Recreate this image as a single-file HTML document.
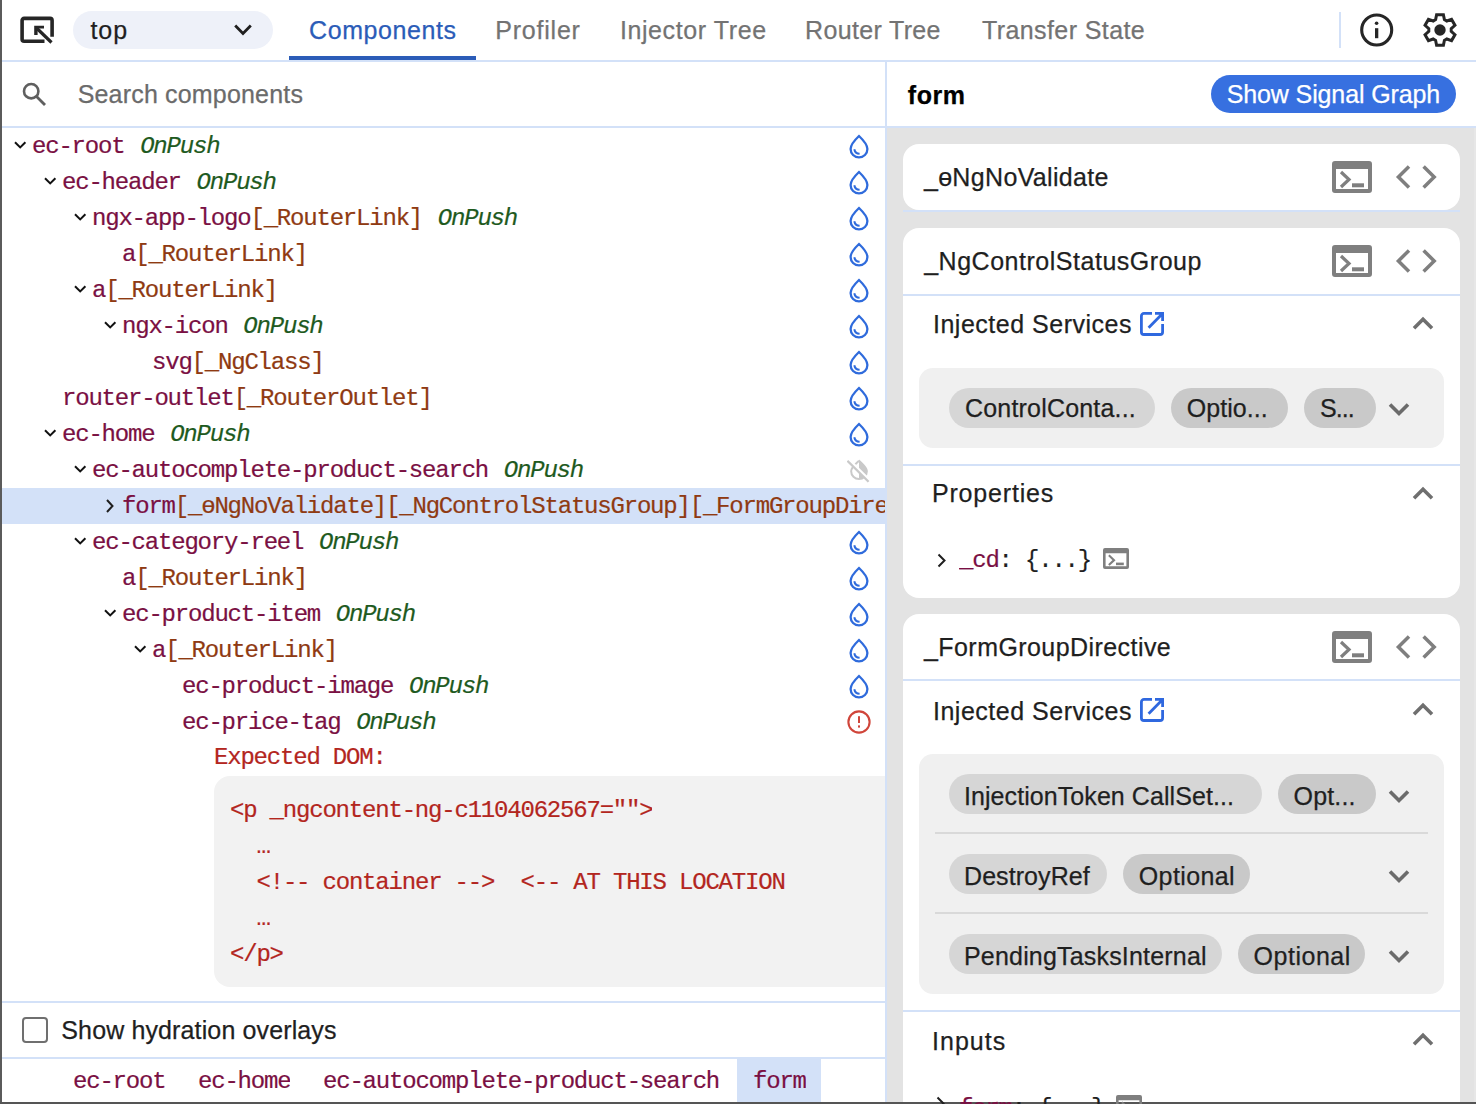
<!DOCTYPE html><html><head><meta charset="utf-8"><style>*{margin:0;padding:0;box-sizing:content-box}
html,body{width:1476px;height:1104px;overflow:hidden;background:#fff;position:relative}
.r,.t,.m,.ic{position:absolute}
.t,.m{z-index:2}.ic{z-index:3}
.t{white-space:pre;-webkit-text-stroke:0.25px currentColor}
.m{white-space:pre;-webkit-text-stroke:0.2px currentColor;font-family:"Liberation Mono",monospace;font-size:24px;letter-spacing:-1.2px;overflow:hidden;max-width:2000px}
.chip{height:40px;border-radius:20px;background:#d6d6d6}
.chip2{height:40px;border-radius:20px;background:#c9c9c9}
</style></head><body>
<div class="r" style="left:0;top:60px;width:1476px;height:2px;background:#d3e1f8"></div>
<svg class="ic" style="left:18px;top:14px" width="40" height="32" viewBox="0 0 40 32"><path d="M26.5 27.2H6.1A2 2 0 0 1 4.1 25.2V6.4A2 2 0 0 1 6.1 4.4H32.1A2 2 0 0 1 34.1 6.4V22.8" fill="none" stroke="#262626" stroke-width="3.6"/><path d="M16.2 11.7H26V14.5H19.6V21H16.2Z" fill="#262626"/><path d="M18 13.5L33.5 28.5" stroke="#262626" stroke-width="3.2"/></svg>
<div class="r" style="left:73px;top:11px;width:200px;height:38px;border-radius:19px;background:#eef1f9"></div>
<svg class="ic" style="left:232px;top:21.5px" width="22" height="16" viewBox="0 0 22 16"><path d="M3.2 3.6l7.8 7.8 7.8-7.8" fill="none" stroke="#1f1f1f" stroke-width="2.8"/></svg>
<div class="r" style="left:289px;top:56px;width:187px;height:4px;background:#2b5cb8"></div>
<div class="r" style="left:1339px;top:12px;width:2px;height:36px;background:#d3e1f8"></div>
<svg class="ic" style="left:1358px;top:11px" width="38" height="38" viewBox="0 0 38 38"><circle cx="18.7" cy="19" r="15" fill="none" stroke="#262626" stroke-width="3.1"/><circle cx="18.6" cy="12.3" r="1.8" fill="#262626"/><rect x="17" y="17.2" width="3.3" height="10" fill="#262626"/></svg>
<svg class="ic" style="left:1420.4px;top:10px" width="40" height="40" viewBox="0 0 40 40"><path d="M15.60 9.60 L16.60 4.70 L23.40 4.70 L24.40 9.60 L26.81 10.99 L31.55 9.41 L34.95 15.29 L31.21 18.61 L31.21 21.39 L34.95 24.71 L31.55 30.59 L26.81 29.01 L24.40 30.40 L23.40 35.30 L16.60 35.30 L15.60 30.40 L13.19 29.01 L8.45 30.59 L5.05 24.71 L8.79 21.39 L8.79 18.61 L5.05 15.29 L8.45 9.41 L13.19 10.99Z" fill="none" stroke="#262626" stroke-width="3" stroke-linejoin="miter"/><circle cx="20" cy="20" r="5.7" fill="#262626"/></svg>
<div class="r" style="left:0;top:126px;width:885px;height:2px;background:#d3e1f8"></div>
<svg class="ic" style="left:20px;top:80px" width="28" height="28" viewBox="0 0 28 28"><circle cx="11.2" cy="11.2" r="7.2" fill="none" stroke="#5f5f5f" stroke-width="2.6"/><path d="M16.3 16.3L25 25" stroke="#5f5f5f" stroke-width="2.8"/></svg>
<div class="r" style="left:2px;top:488px;width:883px;height:36px;background:#d3e1f8"></div>
<div class="m" style="left:32px;top:132.91px;line-height:28.799999999999997px;width:853px;overflow:hidden"><span style="color:#7a1043">ec-root</span> <span style="color:#1e5a1e;font-style:italic;margin-left:2.5px">OnPush</span></div>
<svg class="ic" style="left:14px;top:141.4px" width="13" height="8" viewBox="0 0 13 8"><path d="M1 1.2l5.2 5.2L11.4 1.2" fill="none" stroke="#111" stroke-width="2"/></svg>
<svg class="ic" style="left:847.3px;top:133.5px" width="24" height="26" viewBox="0 0 24 26"><path d="M12 2 C8 5.8 3.6 10 3.6 15 A8.4 8.4 0 0 0 20.4 15 C20.4 10 16 5.8 12 2Z" fill="none" stroke="#2f6bdc" stroke-width="2.3" stroke-linejoin="miter"/><path d="M7.3 15.2 C7.8 18 9.8 19.7 12.6 19.8" fill="none" stroke="#2f6bdc" stroke-width="2"/></svg>
<div class="m" style="left:62px;top:168.91px;line-height:28.799999999999997px;width:823px;overflow:hidden"><span style="color:#7a1043">ec-header</span> <span style="color:#1e5a1e;font-style:italic;margin-left:2.5px">OnPush</span></div>
<svg class="ic" style="left:44px;top:177.4px" width="13" height="8" viewBox="0 0 13 8"><path d="M1 1.2l5.2 5.2L11.4 1.2" fill="none" stroke="#111" stroke-width="2"/></svg>
<svg class="ic" style="left:847.3px;top:169.5px" width="24" height="26" viewBox="0 0 24 26"><path d="M12 2 C8 5.8 3.6 10 3.6 15 A8.4 8.4 0 0 0 20.4 15 C20.4 10 16 5.8 12 2Z" fill="none" stroke="#2f6bdc" stroke-width="2.3" stroke-linejoin="miter"/><path d="M7.3 15.2 C7.8 18 9.8 19.7 12.6 19.8" fill="none" stroke="#2f6bdc" stroke-width="2"/></svg>
<div class="m" style="left:92px;top:204.91px;line-height:28.799999999999997px;width:793px;overflow:hidden"><span style="color:#7a1043">ngx-app-logo</span><span style="color:#8f3a12">[_RouterLink]</span> <span style="color:#1e5a1e;font-style:italic;margin-left:2.5px">OnPush</span></div>
<svg class="ic" style="left:74px;top:213.4px" width="13" height="8" viewBox="0 0 13 8"><path d="M1 1.2l5.2 5.2L11.4 1.2" fill="none" stroke="#111" stroke-width="2"/></svg>
<svg class="ic" style="left:847.3px;top:205.5px" width="24" height="26" viewBox="0 0 24 26"><path d="M12 2 C8 5.8 3.6 10 3.6 15 A8.4 8.4 0 0 0 20.4 15 C20.4 10 16 5.8 12 2Z" fill="none" stroke="#2f6bdc" stroke-width="2.3" stroke-linejoin="miter"/><path d="M7.3 15.2 C7.8 18 9.8 19.7 12.6 19.8" fill="none" stroke="#2f6bdc" stroke-width="2"/></svg>
<div class="m" style="left:122px;top:240.91px;line-height:28.799999999999997px;width:763px;overflow:hidden"><span style="color:#7a1043">a</span><span style="color:#8f3a12">[_RouterLink]</span></div>
<svg class="ic" style="left:847.3px;top:241.5px" width="24" height="26" viewBox="0 0 24 26"><path d="M12 2 C8 5.8 3.6 10 3.6 15 A8.4 8.4 0 0 0 20.4 15 C20.4 10 16 5.8 12 2Z" fill="none" stroke="#2f6bdc" stroke-width="2.3" stroke-linejoin="miter"/><path d="M7.3 15.2 C7.8 18 9.8 19.7 12.6 19.8" fill="none" stroke="#2f6bdc" stroke-width="2"/></svg>
<div class="m" style="left:92px;top:276.91px;line-height:28.799999999999997px;width:793px;overflow:hidden"><span style="color:#7a1043">a</span><span style="color:#8f3a12">[_RouterLink]</span></div>
<svg class="ic" style="left:74px;top:285.4px" width="13" height="8" viewBox="0 0 13 8"><path d="M1 1.2l5.2 5.2L11.4 1.2" fill="none" stroke="#111" stroke-width="2"/></svg>
<svg class="ic" style="left:847.3px;top:277.5px" width="24" height="26" viewBox="0 0 24 26"><path d="M12 2 C8 5.8 3.6 10 3.6 15 A8.4 8.4 0 0 0 20.4 15 C20.4 10 16 5.8 12 2Z" fill="none" stroke="#2f6bdc" stroke-width="2.3" stroke-linejoin="miter"/><path d="M7.3 15.2 C7.8 18 9.8 19.7 12.6 19.8" fill="none" stroke="#2f6bdc" stroke-width="2"/></svg>
<div class="m" style="left:122px;top:312.91px;line-height:28.799999999999997px;width:763px;overflow:hidden"><span style="color:#7a1043">ngx-icon</span> <span style="color:#1e5a1e;font-style:italic;margin-left:2.5px">OnPush</span></div>
<svg class="ic" style="left:104px;top:321.4px" width="13" height="8" viewBox="0 0 13 8"><path d="M1 1.2l5.2 5.2L11.4 1.2" fill="none" stroke="#111" stroke-width="2"/></svg>
<svg class="ic" style="left:847.3px;top:313.5px" width="24" height="26" viewBox="0 0 24 26"><path d="M12 2 C8 5.8 3.6 10 3.6 15 A8.4 8.4 0 0 0 20.4 15 C20.4 10 16 5.8 12 2Z" fill="none" stroke="#2f6bdc" stroke-width="2.3" stroke-linejoin="miter"/><path d="M7.3 15.2 C7.8 18 9.8 19.7 12.6 19.8" fill="none" stroke="#2f6bdc" stroke-width="2"/></svg>
<div class="m" style="left:152px;top:348.91px;line-height:28.799999999999997px;width:733px;overflow:hidden"><span style="color:#7a1043">svg</span><span style="color:#8f3a12">[_NgClass]</span></div>
<svg class="ic" style="left:847.3px;top:349.5px" width="24" height="26" viewBox="0 0 24 26"><path d="M12 2 C8 5.8 3.6 10 3.6 15 A8.4 8.4 0 0 0 20.4 15 C20.4 10 16 5.8 12 2Z" fill="none" stroke="#2f6bdc" stroke-width="2.3" stroke-linejoin="miter"/><path d="M7.3 15.2 C7.8 18 9.8 19.7 12.6 19.8" fill="none" stroke="#2f6bdc" stroke-width="2"/></svg>
<div class="m" style="left:62px;top:384.91px;line-height:28.799999999999997px;width:823px;overflow:hidden"><span style="color:#7a1043">router-outlet</span><span style="color:#8f3a12">[_RouterOutlet]</span></div>
<svg class="ic" style="left:847.3px;top:385.5px" width="24" height="26" viewBox="0 0 24 26"><path d="M12 2 C8 5.8 3.6 10 3.6 15 A8.4 8.4 0 0 0 20.4 15 C20.4 10 16 5.8 12 2Z" fill="none" stroke="#2f6bdc" stroke-width="2.3" stroke-linejoin="miter"/><path d="M7.3 15.2 C7.8 18 9.8 19.7 12.6 19.8" fill="none" stroke="#2f6bdc" stroke-width="2"/></svg>
<div class="m" style="left:62px;top:420.91px;line-height:28.799999999999997px;width:823px;overflow:hidden"><span style="color:#7a1043">ec-home</span> <span style="color:#1e5a1e;font-style:italic;margin-left:2.5px">OnPush</span></div>
<svg class="ic" style="left:44px;top:429.4px" width="13" height="8" viewBox="0 0 13 8"><path d="M1 1.2l5.2 5.2L11.4 1.2" fill="none" stroke="#111" stroke-width="2"/></svg>
<svg class="ic" style="left:847.3px;top:421.5px" width="24" height="26" viewBox="0 0 24 26"><path d="M12 2 C8 5.8 3.6 10 3.6 15 A8.4 8.4 0 0 0 20.4 15 C20.4 10 16 5.8 12 2Z" fill="none" stroke="#2f6bdc" stroke-width="2.3" stroke-linejoin="miter"/><path d="M7.3 15.2 C7.8 18 9.8 19.7 12.6 19.8" fill="none" stroke="#2f6bdc" stroke-width="2"/></svg>
<div class="m" style="left:92px;top:456.91px;line-height:28.799999999999997px;width:793px;overflow:hidden"><span style="color:#7a1043">ec-autocomplete-product-search</span> <span style="color:#1e5a1e;font-style:italic;margin-left:2.5px">OnPush</span></div>
<svg class="ic" style="left:74px;top:465.4px" width="13" height="8" viewBox="0 0 13 8"><path d="M1 1.2l5.2 5.2L11.4 1.2" fill="none" stroke="#111" stroke-width="2"/></svg>
<svg class="ic" style="left:847.3px;top:457.9px" width="24" height="26" viewBox="0 0 24 26"><defs><mask id="nd"><rect x="0" y="0" width="24" height="26" fill="#fff"/><path d="M1.4 1.8L22.6 22.8" stroke="#000" stroke-width="3.6"/></mask></defs><g mask="url(#nd)"><path d="M12 1.4C16 5 20.85 9 20.85 13.25A8.85 8.85 0 0 1 12 22.1Z" fill="#c9c9c9"/><path d="M12 2.8C8.5 6 4.15 9.5 4.15 13.25A7.85 7.85 0 0 0 12 21.1" fill="none" stroke="#c9c9c9" stroke-width="2"/></g><path d="M0.4 2.8L21.6 23.8" stroke="#c9c9c9" stroke-width="2.3"/></svg>
<div class="m" style="left:122px;top:492.91px;line-height:28.799999999999997px;width:763px;overflow:hidden"><span style="color:#7a1043">form</span><span style="color:#8f3a12">[_ɵNgNoValidate][_NgControlStatusGroup][_FormGroupDirective]</span></div>
<svg class="ic" style="left:106px;top:499px" width="8" height="14" viewBox="0 0 8 14"><path d="M1 1l5.5 6L1 13" fill="none" stroke="#1f1f1f" stroke-width="2"/></svg>
<div class="m" style="left:92px;top:528.91px;line-height:28.799999999999997px;width:793px;overflow:hidden"><span style="color:#7a1043">ec-category-reel</span> <span style="color:#1e5a1e;font-style:italic;margin-left:2.5px">OnPush</span></div>
<svg class="ic" style="left:74px;top:537.4px" width="13" height="8" viewBox="0 0 13 8"><path d="M1 1.2l5.2 5.2L11.4 1.2" fill="none" stroke="#111" stroke-width="2"/></svg>
<svg class="ic" style="left:847.3px;top:529.5px" width="24" height="26" viewBox="0 0 24 26"><path d="M12 2 C8 5.8 3.6 10 3.6 15 A8.4 8.4 0 0 0 20.4 15 C20.4 10 16 5.8 12 2Z" fill="none" stroke="#2f6bdc" stroke-width="2.3" stroke-linejoin="miter"/><path d="M7.3 15.2 C7.8 18 9.8 19.7 12.6 19.8" fill="none" stroke="#2f6bdc" stroke-width="2"/></svg>
<div class="m" style="left:122px;top:564.91px;line-height:28.799999999999997px;width:763px;overflow:hidden"><span style="color:#7a1043">a</span><span style="color:#8f3a12">[_RouterLink]</span></div>
<svg class="ic" style="left:847.3px;top:565.5px" width="24" height="26" viewBox="0 0 24 26"><path d="M12 2 C8 5.8 3.6 10 3.6 15 A8.4 8.4 0 0 0 20.4 15 C20.4 10 16 5.8 12 2Z" fill="none" stroke="#2f6bdc" stroke-width="2.3" stroke-linejoin="miter"/><path d="M7.3 15.2 C7.8 18 9.8 19.7 12.6 19.8" fill="none" stroke="#2f6bdc" stroke-width="2"/></svg>
<div class="m" style="left:122px;top:600.91px;line-height:28.799999999999997px;width:763px;overflow:hidden"><span style="color:#7a1043">ec-product-item</span> <span style="color:#1e5a1e;font-style:italic;margin-left:2.5px">OnPush</span></div>
<svg class="ic" style="left:104px;top:609.4px" width="13" height="8" viewBox="0 0 13 8"><path d="M1 1.2l5.2 5.2L11.4 1.2" fill="none" stroke="#111" stroke-width="2"/></svg>
<svg class="ic" style="left:847.3px;top:601.5px" width="24" height="26" viewBox="0 0 24 26"><path d="M12 2 C8 5.8 3.6 10 3.6 15 A8.4 8.4 0 0 0 20.4 15 C20.4 10 16 5.8 12 2Z" fill="none" stroke="#2f6bdc" stroke-width="2.3" stroke-linejoin="miter"/><path d="M7.3 15.2 C7.8 18 9.8 19.7 12.6 19.8" fill="none" stroke="#2f6bdc" stroke-width="2"/></svg>
<div class="m" style="left:152px;top:636.91px;line-height:28.799999999999997px;width:733px;overflow:hidden"><span style="color:#7a1043">a</span><span style="color:#8f3a12">[_RouterLink]</span></div>
<svg class="ic" style="left:134px;top:645.4px" width="13" height="8" viewBox="0 0 13 8"><path d="M1 1.2l5.2 5.2L11.4 1.2" fill="none" stroke="#111" stroke-width="2"/></svg>
<svg class="ic" style="left:847.3px;top:637.5px" width="24" height="26" viewBox="0 0 24 26"><path d="M12 2 C8 5.8 3.6 10 3.6 15 A8.4 8.4 0 0 0 20.4 15 C20.4 10 16 5.8 12 2Z" fill="none" stroke="#2f6bdc" stroke-width="2.3" stroke-linejoin="miter"/><path d="M7.3 15.2 C7.8 18 9.8 19.7 12.6 19.8" fill="none" stroke="#2f6bdc" stroke-width="2"/></svg>
<div class="m" style="left:182px;top:672.91px;line-height:28.799999999999997px;width:703px;overflow:hidden"><span style="color:#7a1043">ec-product-image</span> <span style="color:#1e5a1e;font-style:italic;margin-left:2.5px">OnPush</span></div>
<svg class="ic" style="left:847.3px;top:673.5px" width="24" height="26" viewBox="0 0 24 26"><path d="M12 2 C8 5.8 3.6 10 3.6 15 A8.4 8.4 0 0 0 20.4 15 C20.4 10 16 5.8 12 2Z" fill="none" stroke="#2f6bdc" stroke-width="2.3" stroke-linejoin="miter"/><path d="M7.3 15.2 C7.8 18 9.8 19.7 12.6 19.8" fill="none" stroke="#2f6bdc" stroke-width="2"/></svg>
<div class="m" style="left:182px;top:708.91px;line-height:28.799999999999997px;width:703px;overflow:hidden"><span style="color:#7a1043">ec-price-tag</span> <span style="color:#1e5a1e;font-style:italic;margin-left:2.5px">OnPush</span></div>
<svg class="ic" style="left:846.3px;top:708.9px" width="26" height="26" viewBox="0 0 26 26"><circle cx="13" cy="13" r="10.6" fill="none" stroke="#d0453a" stroke-width="2.1"/><rect x="12" y="7.2" width="2" height="6.8" fill="#d0453a"/><rect x="12" y="16.4" width="2" height="2.2" fill="#d0453a"/></svg>
<div class="r" style="left:214px;top:776px;width:700px;height:211px;border-radius:16px;background:#f2f2f2"></div>
<div class="m" style="left:214px;top:743.61px;line-height:28.799999999999997px;font-size:24px;"><span style="color:#b3261e">Expected DOM:</span></div>
<div class="m" style="left:230px;top:796.61px;line-height:28.799999999999997px;font-size:24px;"><span style="color:#b3261e">&lt;p _ngcontent-ng-c1104062567=&quot;&quot;&gt;</span></div>
<div class="m" style="left:256.5px;top:832.61px;line-height:28.799999999999997px;font-size:24px;"><span style="color:#b3261e">…</span></div>
<div class="m" style="left:256.5px;top:868.61px;line-height:28.799999999999997px;font-size:24px;"><span style="color:#b3261e">&lt;!-- container --&gt;  &lt;-- AT THIS LOCATION</span></div>
<div class="m" style="left:256.5px;top:904.61px;line-height:28.799999999999997px;font-size:24px;"><span style="color:#b3261e">…</span></div>
<div class="m" style="left:230px;top:940.61px;line-height:28.799999999999997px;font-size:24px;"><span style="color:#b3261e">&lt;/p&gt;</span></div>
<div class="m" style="left:73px;top:1068.41px;line-height:28.799999999999997px;font-size:24px;"><span style="color:#7a1043">ec-root</span></div>
<div class="m" style="left:198px;top:1068.41px;line-height:28.799999999999997px;font-size:24px;"><span style="color:#7a1043">ec-home</span></div>
<div class="m" style="left:323px;top:1068.41px;line-height:28.799999999999997px;font-size:24px;"><span style="color:#7a1043">ec-autocomplete-product-search</span></div>
<div class="m" style="left:753px;top:1068.41px;line-height:28.799999999999997px;font-size:24px;"><span style="color:#7a1043">form</span></div>
<div class="m" style="left:959px;top:547.21px;line-height:28.799999999999997px;font-size:24px;"><span style="color:#7a1043">_cd</span><span style="color:#1f1f1f">: {...}</span></div>
<div class="m" style="left:959px;top:1094.71px;line-height:28.799999999999997px;font-size:24px;"><span style="color:#7a1043">form</span><span style="color:#1f1f1f">: {...}</span></div>
<div class="r" style="left:0;top:1001px;width:885px;height:2px;background:#d3e1f8"></div>
<div class="r" style="left:22px;top:1017px;width:22px;height:22px;border:2px solid #6f6f6f;border-radius:4px"></div>
<div class="r" style="left:0;top:1057px;width:885px;height:2px;background:#d3e1f8"></div>
<div class="r" style="left:737px;top:1059px;width:84px;height:43px;background:#d3e1f8"></div>
<div class="r" style="left:887px;top:128px;width:589px;height:976px;background:#e3e3e3"></div>
<div class="r" style="left:887px;top:126px;width:589px;height:2px;background:#d3e1f8"></div>
<div class="r" style="left:885px;top:62px;width:2px;height:1042px;background:#d3e1f8"></div>
<div class="r" style="left:1211px;top:75px;width:245px;height:38px;border-radius:19px;background:#3770e0"></div>
<div class="r" style="left:903px;top:144px;width:557px;height:66px;border-radius:16px;background:#fff"></div>
<div class="r" style="left:903px;top:210px;width:557px;height:2px;background:#d3e1f8"></div>
<svg class="ic" style="left:1332px;top:161px" width="40" height="32" viewBox="0 0 40 32"><path fill-rule="evenodd" fill="#7f7f7f" d="M3 0H37A3 3 0 0 1 40 3V29A3 3 0 0 1 37 32H3A3 3 0 0 1 0 29V3A3 3 0 0 1 3 0ZM4 8V28H36V8Z"/><path d="M9 11l8 7.5-8 7.5" fill="none" stroke="#7f7f7f" stroke-width="3.2"/><rect x="20" y="22.3" width="12" height="4" fill="#7f7f7f"/></svg>
<svg class="ic" style="left:1395px;top:164px" width="42" height="26" viewBox="0 0 42 26"><path d="M14 2.4L3.4 13 14 23.6M28.6 2.4L39.2 13 28.6 23.6" fill="none" stroke="#7f7f7f" stroke-width="3.5"/></svg>
<div class="r" style="left:903px;top:228px;width:557px;height:370px;border-radius:16px;background:#fff"></div>
<div class="r" style="left:903px;top:294px;width:557px;height:2px;background:#d3e1f8"></div>
<svg class="ic" style="left:1332px;top:245px" width="40" height="32" viewBox="0 0 40 32"><path fill-rule="evenodd" fill="#7f7f7f" d="M3 0H37A3 3 0 0 1 40 3V29A3 3 0 0 1 37 32H3A3 3 0 0 1 0 29V3A3 3 0 0 1 3 0ZM4 8V28H36V8Z"/><path d="M9 11l8 7.5-8 7.5" fill="none" stroke="#7f7f7f" stroke-width="3.2"/><rect x="20" y="22.3" width="12" height="4" fill="#7f7f7f"/></svg>
<svg class="ic" style="left:1395px;top:248px" width="42" height="26" viewBox="0 0 42 26"><path d="M14 2.4L3.4 13 14 23.6M28.6 2.4L39.2 13 28.6 23.6" fill="none" stroke="#7f7f7f" stroke-width="3.5"/></svg>
<svg class="ic" style="left:1139px;top:311px" width="26" height="26" viewBox="0 0 26 26"><path d="M13 2.4H5A2.6 2.6 0 0 0 2.4 5V20.9A2.6 2.6 0 0 0 5 23.5H21A2.6 2.6 0 0 0 23.6 20.9V13" fill="none" stroke="#2f68df" stroke-width="2.8"/><path d="M16 2.4H23.6V10M23.6 2.4L9.6 16.8" fill="none" stroke="#2f68df" stroke-width="2.8"/></svg>
<svg class="ic" style="left:1412px;top:316px" width="22" height="14" viewBox="0 0 22 14"><path d="M2 12.2L11 3.2l9 9" fill="none" stroke="#6f6f6f" stroke-width="3.6"/></svg>
<div class="r" style="left:919px;top:368px;width:525px;height:80px;border-radius:14px;background:#f0f0f0"></div>
<div class="r chip" style="left:949px;top:388px;width:206px"></div>
<div class="r chip2" style="left:1171px;top:388px;width:117px"></div>
<div class="r chip2" style="left:1304px;top:388px;width:72px"></div>
<svg class="ic" style="left:1388px;top:402.3px" width="22" height="15" viewBox="0 0 22 15"><path d="M2 2.5l9 9 9-9" fill="none" stroke="#6b6b6b" stroke-width="3.6"/></svg>
<div class="r" style="left:903px;top:464px;width:557px;height:2px;background:#d3e1f8"></div>
<svg class="ic" style="left:1412px;top:486px" width="22" height="14" viewBox="0 0 22 14"><path d="M2 12.2L11 3.2l9 9" fill="none" stroke="#6f6f6f" stroke-width="3.6"/></svg>
<svg class="ic" style="left:937px;top:553px" width="10" height="15" viewBox="0 0 10 15"><path d="M1.5 1.5l6 6-6 6" fill="none" stroke="#1f1f1f" stroke-width="2"/></svg>
<svg class="ic" style="left:1102.6px;top:548px" width="26" height="21" viewBox="0 0 40 32"><path fill-rule="evenodd" fill="#7f7f7f" d="M3 0H37A3 3 0 0 1 40 3V29A3 3 0 0 1 37 32H3A3 3 0 0 1 0 29V3A3 3 0 0 1 3 0ZM4 8V28H36V8Z"/><path d="M9 11l8 7.5-8 7.5" fill="none" stroke="#7f7f7f" stroke-width="3.2"/><rect x="20" y="22.3" width="12" height="4" fill="#7f7f7f"/></svg>
<div class="r" style="left:903px;top:614px;width:557px;height:520px;border-radius:16px;background:#fff"></div>
<div class="r" style="left:903px;top:679px;width:557px;height:2px;background:#d3e1f8"></div>
<svg class="ic" style="left:1332px;top:631px" width="40" height="32" viewBox="0 0 40 32"><path fill-rule="evenodd" fill="#7f7f7f" d="M3 0H37A3 3 0 0 1 40 3V29A3 3 0 0 1 37 32H3A3 3 0 0 1 0 29V3A3 3 0 0 1 3 0ZM4 8V28H36V8Z"/><path d="M9 11l8 7.5-8 7.5" fill="none" stroke="#7f7f7f" stroke-width="3.2"/><rect x="20" y="22.3" width="12" height="4" fill="#7f7f7f"/></svg>
<svg class="ic" style="left:1395px;top:634px" width="42" height="26" viewBox="0 0 42 26"><path d="M14 2.4L3.4 13 14 23.6M28.6 2.4L39.2 13 28.6 23.6" fill="none" stroke="#7f7f7f" stroke-width="3.5"/></svg>
<svg class="ic" style="left:1139px;top:697px" width="26" height="26" viewBox="0 0 26 26"><path d="M13 2.4H5A2.6 2.6 0 0 0 2.4 5V20.9A2.6 2.6 0 0 0 5 23.5H21A2.6 2.6 0 0 0 23.6 20.9V13" fill="none" stroke="#2f68df" stroke-width="2.8"/><path d="M16 2.4H23.6V10M23.6 2.4L9.6 16.8" fill="none" stroke="#2f68df" stroke-width="2.8"/></svg>
<svg class="ic" style="left:1412px;top:702px" width="22" height="14" viewBox="0 0 22 14"><path d="M2 12.2L11 3.2l9 9" fill="none" stroke="#6f6f6f" stroke-width="3.6"/></svg>
<div class="r" style="left:919px;top:754px;width:525px;height:240px;border-radius:14px;background:#f0f0f0"></div>
<div class="r chip" style="left:949px;top:774px;width:313px"></div>
<div class="r chip2" style="left:1278px;top:774px;width:98px"></div>
<svg class="ic" style="left:1388px;top:789.3px" width="22" height="15" viewBox="0 0 22 15"><path d="M2 2.5l9 9 9-9" fill="none" stroke="#6b6b6b" stroke-width="3.6"/></svg>
<div class="r" style="left:935px;top:832px;width:493px;height:2px;background:#d9d9d9"></div>
<div class="r chip" style="left:949px;top:854px;width:158px"></div>
<div class="r chip2" style="left:1123px;top:854px;width:127px"></div>
<svg class="ic" style="left:1388px;top:869.3px" width="22" height="15" viewBox="0 0 22 15"><path d="M2 2.5l9 9 9-9" fill="none" stroke="#6b6b6b" stroke-width="3.6"/></svg>
<div class="r" style="left:935px;top:912px;width:493px;height:2px;background:#d9d9d9"></div>
<div class="r chip" style="left:949px;top:934px;width:273px"></div>
<div class="r chip2" style="left:1238px;top:934px;width:127px"></div>
<svg class="ic" style="left:1388px;top:949.3px" width="22" height="15" viewBox="0 0 22 15"><path d="M2 2.5l9 9 9-9" fill="none" stroke="#6b6b6b" stroke-width="3.6"/></svg>
<div class="r" style="left:903px;top:1010px;width:557px;height:2px;background:#d3e1f8"></div>
<svg class="ic" style="left:1412px;top:1032px" width="22" height="14" viewBox="0 0 22 14"><path d="M2 12.2L11 3.2l9 9" fill="none" stroke="#6f6f6f" stroke-width="3.6"/></svg>
<svg class="ic" style="left:936px;top:1096px" width="10" height="15" viewBox="0 0 10 15"><path d="M1.5 1.5l6 6-6 6" fill="none" stroke="#1f1f1f" stroke-width="2"/></svg>
<svg class="ic" style="left:1116px;top:1095px" width="26" height="21" viewBox="0 0 40 32"><path fill-rule="evenodd" fill="#7f7f7f" d="M3 0H37A3 3 0 0 1 40 3V29A3 3 0 0 1 37 32H3A3 3 0 0 1 0 29V3A3 3 0 0 1 3 0ZM4 8V28H36V8Z"/><path d="M9 11l8 7.5-8 7.5" fill="none" stroke="#7f7f7f" stroke-width="3.2"/><rect x="20" y="22.3" width="12" height="4" fill="#7f7f7f"/></svg>
<div class="r" style="left:1474px;top:128px;width:2px;height:974px;background:#e7e7e7"></div>
<div class="t" style="left:90.40px;top:15.33px;font:normal 400 25px/30.00px 'Liberation Sans';letter-spacing:0.975px;color:#1f1f1f">top</div>
<div class="t" style="left:309.00px;top:15.33px;font:normal 400 25px/30.00px 'Liberation Sans';letter-spacing:0.595px;color:#2b5cb8">Components</div>
<div class="t" style="left:495.30px;top:15.33px;font:normal 400 25px/30.00px 'Liberation Sans';letter-spacing:0.777px;color:#737373">Profiler</div>
<div class="t" style="left:619.90px;top:15.33px;font:normal 400 25px/30.00px 'Liberation Sans';letter-spacing:0.600px;color:#737373">Injector Tree</div>
<div class="t" style="left:805.00px;top:15.33px;font:normal 400 25px/30.00px 'Liberation Sans';letter-spacing:0.345px;color:#737373">Router Tree</div>
<div class="t" style="left:982.00px;top:15.33px;font:normal 400 25px/30.00px 'Liberation Sans';letter-spacing:0.403px;color:#737373">Transfer State</div>
<div class="t" style="left:77.70px;top:79.23px;font:normal 400 25px/30.00px 'Liberation Sans';letter-spacing:0.178px;color:#6b6b6b">Search components</div>
<div class="t" style="left:907.80px;top:79.63px;font:normal 700 25px/30.00px 'Liberation Sans';letter-spacing:0.525px;color:#000000">form</div>
<div class="t" style="left:1226.70px;top:79.13px;font:normal 400 25px/30.00px 'Liberation Sans';letter-spacing:-0.119px;color:#ffffff">Show Signal Graph</div>
<div class="t" style="left:923.90px;top:162.23px;font:normal 400 25px/30.00px 'Liberation Sans';letter-spacing:0.338px;color:#1f1f1f">_ɵNgNoValidate</div>
<div class="t" style="left:924.20px;top:246.33px;font:normal 400 25px/30.00px 'Liberation Sans';letter-spacing:0.520px;color:#1f1f1f">_NgControlStatusGroup</div>
<div class="t" style="left:933.00px;top:309.33px;font:normal 400 25px/30.00px 'Liberation Sans';letter-spacing:0.508px;color:#1f1f1f">Injected Services</div>
<div class="t" style="left:965.00px;top:393.33px;font:normal 400 25px/30.00px 'Liberation Sans';letter-spacing:0.186px;color:#1f1f1f">ControlConta...</div>
<div class="t" style="left:1186.80px;top:393.33px;font:normal 400 25px/30.00px 'Liberation Sans';letter-spacing:0.036px;color:#1f1f1f">Optio...</div>
<div class="t" style="left:1319.90px;top:393.33px;font:normal 400 25px/30.00px 'Liberation Sans';letter-spacing:-0.889px;color:#1f1f1f">S...</div>
<div class="t" style="left:932.00px;top:478.33px;font:normal 400 25px/30.00px 'Liberation Sans';letter-spacing:0.807px;color:#1f1f1f">Properties</div>
<div class="t" style="left:924.00px;top:632.13px;font:normal 400 25px/30.00px 'Liberation Sans';letter-spacing:0.431px;color:#1f1f1f">_FormGroupDirective</div>
<div class="t" style="left:933.00px;top:696.33px;font:normal 400 25px/30.00px 'Liberation Sans';letter-spacing:0.508px;color:#1f1f1f">Injected Services</div>
<div class="t" style="left:964.00px;top:780.53px;font:normal 400 25px/30.00px 'Liberation Sans';letter-spacing:0.073px;color:#1f1f1f">InjectionToken CallSet...</div>
<div class="t" style="left:1293.50px;top:780.53px;font:normal 400 25px/30.00px 'Liberation Sans';letter-spacing:0.183px;color:#1f1f1f">Opt...</div>
<div class="t" style="left:964.00px;top:860.53px;font:normal 400 25px/30.00px 'Liberation Sans';letter-spacing:0.079px;color:#1f1f1f">DestroyRef</div>
<div class="t" style="left:1138.80px;top:860.53px;font:normal 400 25px/30.00px 'Liberation Sans';letter-spacing:0.377px;color:#1f1f1f">Optional</div>
<div class="t" style="left:964.00px;top:940.53px;font:normal 400 25px/30.00px 'Liberation Sans';letter-spacing:0.185px;color:#1f1f1f">PendingTasksInternal</div>
<div class="t" style="left:1253.50px;top:940.53px;font:normal 400 25px/30.00px 'Liberation Sans';letter-spacing:0.534px;color:#1f1f1f">Optional</div>
<div class="t" style="left:932.00px;top:1026.03px;font:normal 400 25px/30.00px 'Liberation Sans';letter-spacing:1.019px;color:#1f1f1f">Inputs</div>
<div class="t" style="left:61.30px;top:1015.13px;font:normal 400 25px/30.00px 'Liberation Sans';letter-spacing:0.129px;color:#1f1f1f">Show hydration overlays</div>
<div class="r" style="left:0;top:0;width:2px;height:1104px;background:#5b5b5b"></div>
<div class="r" style="left:0;top:1102px;width:1476px;height:2px;background:#555"></div>
</body></html>
